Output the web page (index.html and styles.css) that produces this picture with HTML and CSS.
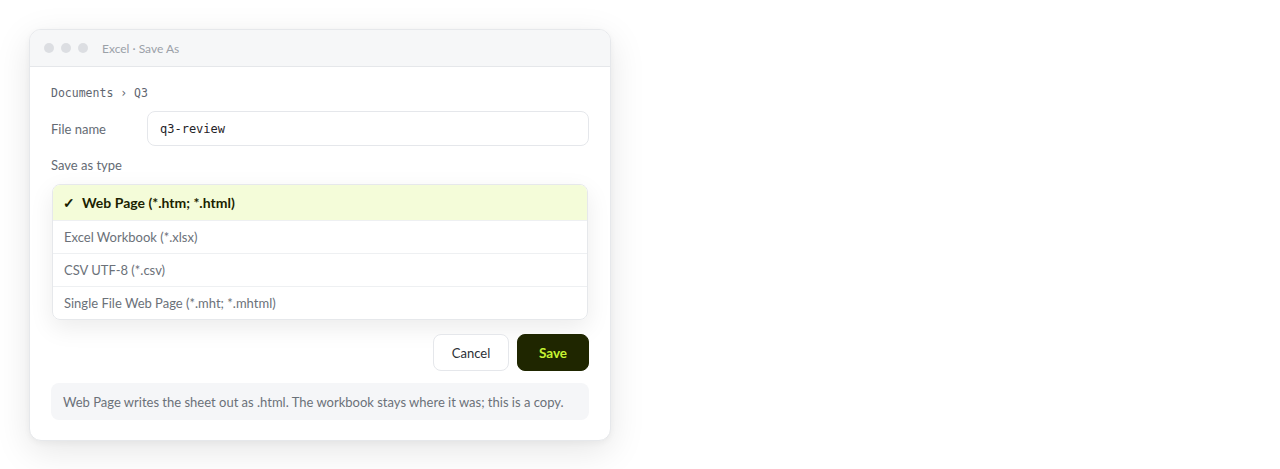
FILE: index.html
```html
<!DOCTYPE html>
<html lang="en">
<head>
<meta charset="utf-8">
<title>Excel · Save As</title>
<link rel="stylesheet" href="styles.css">
</head>
<body>
<div class="window">
  <div class="titlebar">
    <span class="dot"></span><span class="dot"></span><span class="dot"></span>
    <span class="title">Excel · Save As</span>
  </div>
  <div class="content">
    <div class="crumbs">Documents › Q3</div>
    <div class="field">
      <label class="label">File name</label>
      <div class="input">q3-review</div>
    </div>
    <div class="label type-label">Save as type</div>
    <ul class="list">
      <li class="item selected"><span class="check">✓</span>Web Page (*.htm; *.html)</li>
      <li class="item">Excel Workbook (*.xlsx)</li>
      <li class="item">CSV UTF-8 (*.csv)</li>
      <li class="item">Single File Web Page (*.mht; *.mhtml)</li>
    </ul>
    <div class="actions">
      <button class="btn cancel">Cancel</button>
      <button class="btn save">Save</button>
    </div>
    <div class="note">Web Page writes the sheet out as .html. The workbook stays where it was; this is a copy.</div>
  </div>
</div>
</body>
</html>
```
FILE: styles.css
```css
* { box-sizing: border-box; }
html, body { margin: 0; background: #fff; }
body {
  padding: 29px;
  font-family: Lato, "Noto Sans", sans-serif;
  color: #1f2328;
}
.window {
  width: 582px;
  background: #fff;
  border: 1px solid #e6e8eb;
  border-radius: 12px;
  box-shadow: 0 10px 36px rgba(0,0,0,0.10), 0 2px 6px rgba(0,0,0,0.04);
  overflow: hidden;
}
.titlebar {
  height: 37px;
  background: #f6f7f8;
  border-bottom: 1px solid #e5e7ea;
  display: flex;
  align-items: center;
  padding-left: 14px;
  gap: 7px;
}
.dot {
  width: 10px; height: 10px; border-radius: 50%;
  background: #dcdee2;
}
.title {
  margin-left: 7px;
  font-size: 12px;
  color: #9ba1a8;
}
.content {
  padding: 18px 21px 20px 21px;
}
.crumbs {
  font-family: "DejaVu Sans Mono", monospace;
  font-size: 11.5px;
  color: #5f6670;
  line-height: 16px;
}
.field {
  display: flex;
  align-items: center;
  margin-top: 10px;
}
.label {
  font-size: 13px;
  color: #646b74;
}
.field .label { width: 96px; }
.input {
  flex: 1;
  height: 35px;
  border: 1px solid #e5e7eb;
  border-radius: 8px;
  display: flex;
  align-items: center;
  padding-left: 12px;
  font-family: "DejaVu Sans Mono", monospace;
  font-size: 12px;
  color: #1f2328;
}
.type-label { margin-top: 11px; line-height: 16px; }
.list {
  list-style: none;
  margin: 11px 1px 0 1px;
  padding: 0;
  border: 1px solid #e6e8eb;
  border-radius: 8px;
  overflow: hidden;
  box-shadow: 0 8px 24px rgba(0,0,0,0.08);
}
.item {
  height: 33px;
  display: flex;
  align-items: center;
  padding-left: 11px;
  font-size: 13px;
  color: #6b7179;
  border-top: 1px solid #eef0f2;
}
.item:first-child { border-top: none; }
.item.selected {
  height: 35px;
  background: #f4fcd9;
  color: #1b1f00;
  font-weight: 700;
  font-size: 14px;
  padding-left: 10px;
}
.check { display: inline-block; width: 19px; font-weight: 700; }
.actions {
  display: flex;
  justify-content: flex-end;
  gap: 8px;
  margin-top: 14px;
}
.btn {
  height: 37px;
  border-radius: 8px;
  font-family: inherit;
  font-size: 13px;
  cursor: pointer;
}
.cancel {
  width: 76px;
  background: #fff;
  border: 1px solid #e5e7eb;
  color: #2a2f35;
}
.save {
  width: 72px;
  background: #1f2600;
  border: 1px solid #1f2600;
  color: #c6f432;
  font-weight: 700;
  font-size: 13.5px;
}
.note {
  margin-top: 12px;
  background: #f5f6f8;
  border-radius: 8px;
  padding: 0 12px;
  height: 37px;
  display: flex;
  align-items: center;
  font-size: 13px;
  color: #6b7179;
}
```
